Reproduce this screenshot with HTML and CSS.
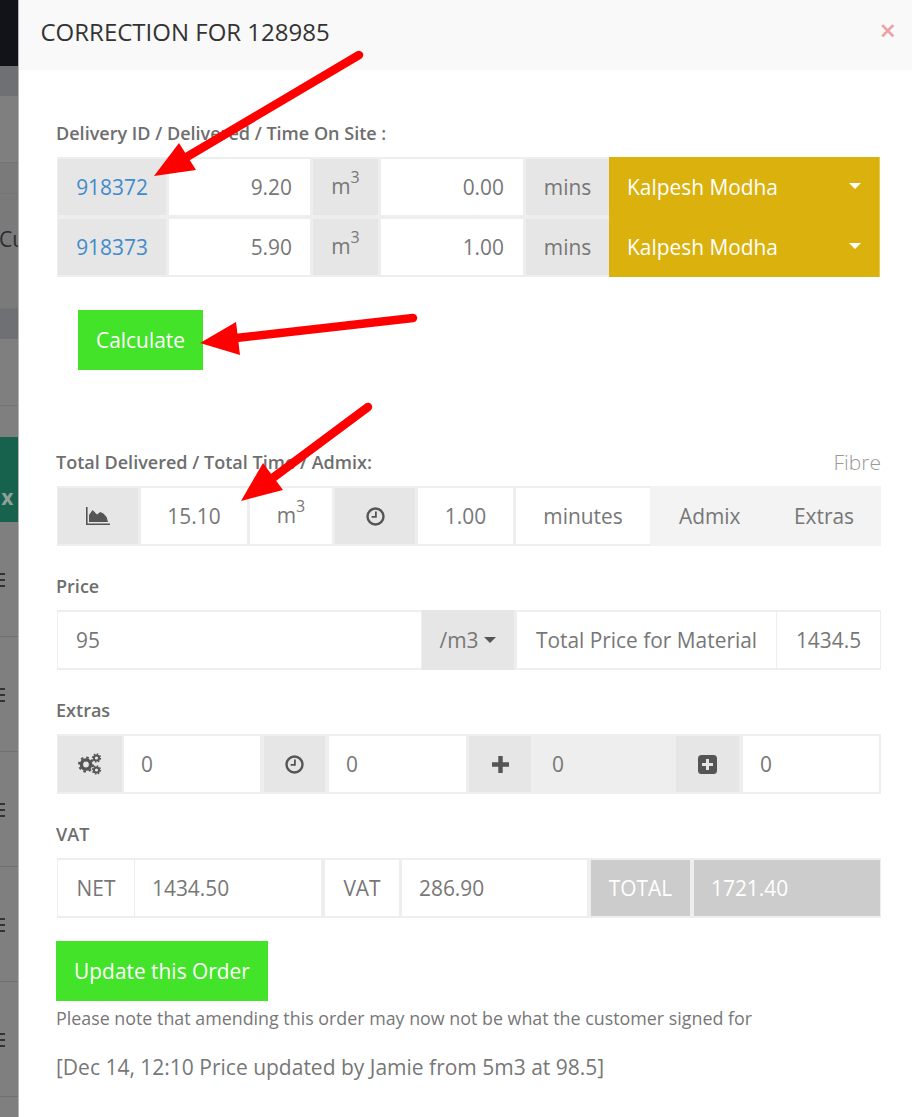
FILE: index.html
```html
<!DOCTYPE html>
<html lang="en">
<head>
<meta charset="utf-8">
<title>Correction for 128985</title>
<link rel="stylesheet" href="styles.css">
</head>
<body>
<div class="screen">
  <aside class="backdrop">
    <div class="bd-dark"></div>
    <div class="bd-head"></div>
    <div class="bd-row bd-r1"></div>
    <div class="bd-row bd-r2"></div>
    <div class="bd-row bd-cust">Cu</div>
    <div class="bd-head"></div>
    <div class="bd-row bd-r3"></div>
    <div class="bd-row bd-r4"></div>
    <div class="bd-green"><span>x</span></div>
    <div class="bd-menu"><i></i><i></i><i></i></div>
    <div class="bd-menu"><i></i><i></i><i></i></div>
    <div class="bd-menu"><i></i><i></i><i></i></div>
    <div class="bd-menu"><i></i><i></i><i></i></div>
    <div class="bd-menu"><i></i><i></i><i></i></div>
  </aside>
  <main class="modal">
    <header class="modal-head">
      <h1>CORRECTION FOR 128985</h1>
      <span class="close">×</span>
    </header>
    <div class="modal-body">
      <label class="lbl">Delivery ID / Delivered / Time On Site :</label>
      <div class="deliveries">
        <div class="group-rows">
          <div class="cell addon"><a href="#">918372</a></div>
          <div class="cell input num gap3">9.20</div>
          <div class="cell addon gap3"><span class="unit">m<sup>3</sup></span></div>
          <div class="cell input num num2 gap3">0.00</div>
          <div class="cell addon gap3">mins</div>
          <div class="cell addon"><a href="#">918373</a></div>
          <div class="cell input num gap3">5.90</div>
          <div class="cell addon gap3"><span class="unit">m<sup>3</sup></span></div>
          <div class="cell input num num2 gap3">1.00</div>
          <div class="cell addon gap3">mins</div>
        </div>
        <div class="drivers">
          <div class="driver"><span>Kalpesh Modha</span><b class="caret"></b></div>
          <div class="driver"><span>Kalpesh Modha</span><b class="caret"></b></div>
        </div>
      </div>
      <button class="btn btn-calc">Calculate</button>
      <div class="lbl-row">
        <label class="lbl">Total Delivered / Total Time / Admix:</label>
        <span class="fibre">Fibre</span>
      </div>
      <div class="group g-total">
        <div class="cell addon">
          <svg class="ic" width="24" height="20" viewBox="0 0 24 20"><path d="M0 1h1.6v16.4H24V19H0z"/><path d="M3 16V9l3.6-5 4.4 4.5 3.2-2.500 3.2 1.500 3.200 3.500 1.400 5z"/></svg>
        </div>
        <div class="cell input center gap3">15.10</div>
        <div class="cell input center gap3"><span class="unit">m<sup>3</sup></span></div>
        <div class="cell addon gap3">
          <svg class="ic" width="19" height="19" viewBox="0 0 19 19"><circle cx="9.5" cy="9.5" r="8" fill="none" stroke="#555" stroke-width="2.4"/><path d="M9 4.5h1.8v6.2H5.6V9H9z"/></svg>
        </div>
        <div class="cell input center gap3">1.00</div>
        <div class="cell input center gap3">minutes</div>
        <div class="cell soft"><span>Admix</span><span>Extras</span></div>
      </div>
      <label class="lbl">Price</label>
      <div class="group g-price">
        <div class="cell input pad">95</div>
        <div class="cell addon tall gap1">/m3 <b class="caret-dark"></b></div>
        <div class="cell input center gap3">Total Price for Material</div>
        <div class="cell input center gap1">1434.5</div>
      </div>
      <label class="lbl">Extras</label>
      <div class="group g-extras">
        <div class="cell addon">
          <svg class="ic" width="24" height="22" viewBox="0 0 24 22"><g transform="translate(8 11.5)"><circle r="4.6" fill="none" stroke="#555" stroke-width="3.4"/><circle r="7" fill="none" stroke="#555" stroke-width="2" stroke-dasharray="2.6 2.9"/></g><g transform="translate(18.5 5)"><circle r="2.6" fill="none" stroke="#555" stroke-width="2"/><circle r="4" fill="none" stroke="#555" stroke-width="1.4" stroke-dasharray="1.6 1.5"/></g><g transform="translate(18.5 17)"><circle r="2.6" fill="none" stroke="#555" stroke-width="2"/><circle r="4" fill="none" stroke="#555" stroke-width="1.4" stroke-dasharray="1.6 1.5"/></g></svg>
        </div>
        <div class="cell input pad-s gap2">0</div>
        <div class="cell addon gap4">
          <svg class="ic" width="19" height="19" viewBox="0 0 19 19"><circle cx="9.5" cy="9.5" r="8" fill="none" stroke="#555" stroke-width="2.4"/><path d="M9 4.5h1.8v6.2H5.6V9H9z"/></svg>
        </div>
        <div class="cell input pad-s gap4">0</div>
        <div class="cell addon gap3">
          <svg class="ic" width="17" height="17" viewBox="0 0 17 17"><path d="M6.3 0h4.4v6.3H17v4.4h-6.3V17H6.3v-6.3H0V6.3h6.3z"/></svg>
        </div>
        <div class="cell disabled pad-s gap4">0</div>
        <div class="cell addon">
          <svg class="ic" width="19" height="19" viewBox="0 0 19 19"><path fill-rule="evenodd" d="M3.500 0h12A3.500 3.500 0 0 1 19 3.500v12a3.500 3.500 0 0 1-3.500 3.500h-12A3.500 3.500 0 0 1 0 15.500v-12A3.500 3.500 0 0 1 3.500 0zM8 4v4H4v3h4v4h3v-4h4V8h-4V4z"/></svg>
        </div>
        <div class="cell input pad-s gap4">0</div>
      </div>
      <label class="lbl">VAT</label>
      <div class="group g-vat">
        <div class="cell input center">NET</div>
        <div class="cell input pad-s gap1">1434.50</div>
        <div class="cell input center gap4">VAT</div>
        <div class="cell input pad-s gap3">286.90</div>
        <div class="cell grey center gap4">TOTAL</div>
        <div class="cell grey pad-s gap4">1721.40</div>
      </div>
      <button class="btn btn-update">Update this Order</button>
      <p class="note">Please note that amending this order may now not be what the customer signed for</p>
      <p class="history">[Dec 14, 12:10 Price updated by Jamie from 5m3 at 98.5]</p>
    </div>
  </main>
  <svg class="arrows" width="912" height="1117" viewBox="0 0 912 1117">
    <g stroke="#f00" stroke-width="8.500" stroke-linecap="round" fill="#f00">
      <path d="M359 55 185 158"/>
      <path d="M413 318 236 338"/>
      <path d="M368 407 270 480"/>
    </g>
    <g fill="#f00">
      <path d="M154 176 179 143 196 170z"/>
      <path d="M200 343 236 322 240 355z"/>
      <path d="M241 501 263 463 283 490z"/>
    </g>
  </svg>
</div>
</body>
</html>
```
FILE: styles.css
```css
* { box-sizing: border-box; }
html, body { margin: 0; padding: 0; }
body {
  width: 912px;
  height: 1117px;
  overflow: hidden;
  background: #fff;
  font-family: "Open Sans", "Noto Sans", sans-serif;
  color: #777;
}
.screen { position: relative; display: flex; width: 912px; height: 1117px; overflow: hidden; }

/* dimmed page behind the dialog */
.backdrop {
  flex: 0 0 18.500px;
  height: 1117px;
  overflow: hidden;
  background: #7f7f7f;
  border-right: 1px solid #b5b5b5;
}
.bd-dark { height: 66px; background: #121318; }
.bd-head { height: 30px; background: #6f7074; }
.bd-row { border-bottom: 1px solid #747474; }
.bd-r1 { height: 67px; }
.bd-r2 { height: 31px; background: #7a7a7a; }
.bd-cust {
  height: 115px;
  padding-top: 31px;
  font-size: 21px;
  line-height: 28px;
  color: #2b2c30;
  background: #7a7a7a;
  white-space: nowrap;
  margin-left: -1px;
}
.bd-r3 { height: 67px; }
.bd-r4 { height: 31px; border-bottom: 0; }
.bd-green {
  height: 85px;
  background: #17624d;
  color: #8f9f99;
  font-size: 21px;
  font-weight: 700;
  line-height: 26px;
  padding-top: 47px;
  text-align: right;
  padding-right: 4px;
}
.bd-menu {
  display: flex;
  flex-direction: column;
  height: 115px;
  padding-top: 51px;
  border-bottom: 1px solid #6f6f6f;
}
.bd-menu i { display: block; width: 5px; height: 2px; background: #333; margin-bottom: 4px; }

/* dialog */
.modal { flex: 1; min-width: 0; background: #fff; }
.modal-head {
  display: flex;
  align-items: center;
  justify-content: space-between;
  height: 70px;
  padding: 0 16px 8px 22px;
  background: #f9f9f9;
}
.modal-head h1 { margin: 0; font-size: 24px; font-weight: 400; color: #333; line-height: 30px; position: relative; top: 1px; }
.close { color: #eea0a0; font-size: 29px; font-weight: 600; line-height: 30px; position: relative; top: -1px; }
.modal-body { padding: 52px 31px 0 37.500px; }

.lbl { display: block; font-size: 18.050px; font-weight: 600; color: #6e6e6e; line-height: 22px; margin: 0 0 13px; white-space: nowrap; }
.lbl-row { display: flex; justify-content: space-between; align-items: flex-start; width: 825px; height: 35px; margin-top: 81px; }
.lbl-row .lbl { margin-bottom: 0; }
.fibre { font-size: 21px; font-weight: 300; color: #999; line-height: 22px; }

.cell {
  display: flex;
  align-items: center;
  min-width: 0;
  height: 56px;
  font-size: 20.900px;
  line-height: 28px;
  white-space: nowrap;
  color: #777;
}
.unit { position: relative; top: -1px; }
.cell sup { font-size: 16px; line-height: 0; position: relative; top: -3px; vertical-align: super; }
.addon { justify-content: center; background: #e6e6e6; }
.input { background: #fff; }
.disabled { background: #eee; }
.grey { background: #ccc; color: #fff; }
.soft {
  justify-content: space-between;
  height: 60px;
  margin: -2px -1px -2px 0;
  padding: 0 27px 0 29px;
  background: #f3f3f3;
}
.num { justify-content: flex-end; padding-right: 18px; }
.num2 { padding-right: 19px; }
.center { justify-content: center; }
.pad { padding-left: 18px; }
.pad-s { padding-left: 17px; }
.gap1 { margin-left: 1px; }
.gap2 { margin-left: 2px; }
.gap3 { margin-left: 3px; }
.gap4 { margin-left: 4px; }
.tall { height: 60px; margin-top: -2px; margin-bottom: -2px; }
.cell a { color: #428bca; text-decoration: none; }
.ic { display: block; fill: #555; }

.deliveries { display: flex; width: 823px; height: 120px; margin-left: 1px; }
.group-rows {
  display: grid;
  grid-template-columns: 108px 144px 68px 145px 86px;
  row-gap: 4px;
  width: 552px;
  padding: 2px 0 2px 1px;
  background: #eee;
}
.drivers { flex: 1; background: #dab10d; border-right: 1px solid #e6c84d; }
.driver {
  display: flex;
  align-items: center;
  justify-content: space-between;
  height: 60px;
  padding: 0 18px 0 18px;
  color: #fff;
  font-size: 20.900px;
}
.caret { width: 0; height: 0; border-left: 6px solid transparent; border-right: 6px solid transparent; border-top: 6px solid #fff; position: relative; top: -1px; }
.caret-dark { display: inline-block; width: 0; height: 0; margin-left: 6px; border-left: 6px solid transparent; border-right: 6px solid transparent; border-top: 6px solid #555; }

.btn {
  display: block;
  height: 60px;
  padding: 0;
  border: 0;
  background: #43e329;
  color: #fff;
  font-family: inherit;
  font-size: 20.900px;
}
.btn-calc { width: 125px; margin: 33px 0 0 22px; }
.btn-update { width: 212px; }

.group {
  display: grid;
  width: 824px;
  height: 60px;
  margin: 0 0 29px 1px;
  padding: 2px 0 2px 1px;
  background: #eee;
}
.g-total { grid-template-columns: 80px 109px 85px 83px 98px 137px 230px; width: 823px; }
.g-price { grid-template-columns: 363px 93px 262px 104px; }
.g-extras { grid-template-columns: 64px 138px 65px 141px 65px 145px 63px 140px; }
.g-vat { grid-template-columns: 76px 187px 78px 188px 103px 190px; margin-bottom: 23px; }

.note { margin: 6px 0 0; font-size: 17.850px; line-height: 22px; color: #777; white-space: nowrap; }
.history { margin: 24px 0 0; font-size: 21px; line-height: 28px; color: #777; white-space: nowrap; }

/* red annotation arrows drawn over the screenshot */
.arrows { position: absolute; left: 0; top: 0; pointer-events: none; }
```
